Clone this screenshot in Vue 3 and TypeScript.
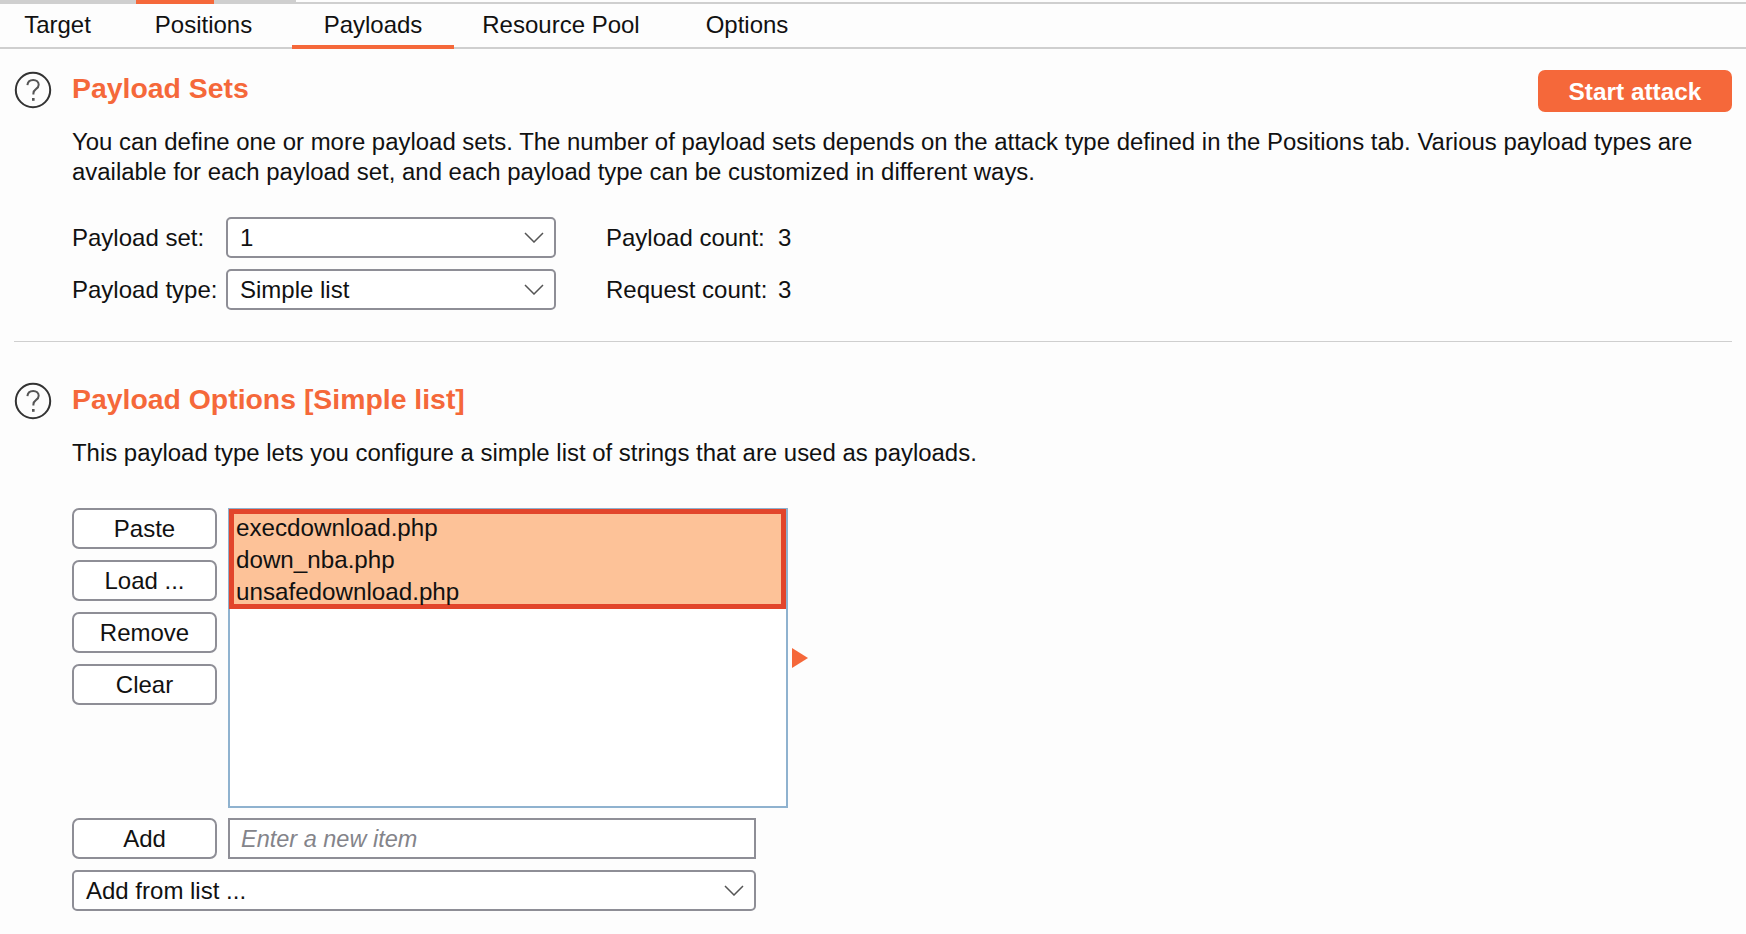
<template>
  <div class="page">
    <div class="top-strip"><span class="strip-active"></span></div>

    <nav class="tabs">
      <span v-for="tab in tabs" :key="tab.name" class="tab" :class="{ active: tab.name === 'Payloads' }" :style="{ width: tab.width + 'px' }">{{ tab.name }}</span>
    </nav>

    <section class="section first">
      <svg class="help" viewBox="0 0 38 38" width="38" height="38">
        <circle cx="19" cy="19" r="17.2" fill="none" stroke="#333" stroke-width="2" />
        <path d="M13.4 14.2c.3-3.400 2.700-5.300 5.800-5.300 3.200 0 5.500 1.900 5.500 4.800 0 2.200-1.200 3.300-2.800 4.400-1.700 1.200-2.500 2.100-2.500 4.400v1.100" fill="none" stroke="#555" stroke-width="2" />
        <rect x="18" y="27" width="2.600" height="2.800" fill="#555" />
      </svg>
      <div class="body">
        <div class="head">
          <h2>Payload Sets</h2>
          <button class="start">Start attack</button>
        </div>
        <p class="desc">You can define one or more payload sets. The number of payload sets depends on the attack type defined in the Positions tab. Various payload types are<br />available for each payload set, and each payload type can be customized in different ways.</p>
        <div class="form">
          <div v-for="row in setRows" :key="row.label" class="form-row">
            <span class="label">{{ row.label }}</span>
            <div class="select set-select">
              <span>{{ row.value }}</span>
              <svg class="chev" viewBox="0 0 20 11" width="20" height="11"><path d="M1 1l9 9 9-9" fill="none" stroke="#555" stroke-width="1.500" /></svg>
            </div>
            <span class="count-label">{{ row.countLabel }}</span>
            <span>3</span>
          </div>
        </div>
      </div>
    </section>

    <hr class="divider" />

    <section class="section second">
      <svg class="help" viewBox="0 0 38 38" width="38" height="38">
        <circle cx="19" cy="19" r="17.2" fill="none" stroke="#333" stroke-width="2" />
        <path d="M13.4 14.2c.3-3.400 2.700-5.300 5.800-5.300 3.200 0 5.500 1.900 5.500 4.800 0 2.200-1.200 3.300-2.800 4.400-1.700 1.200-2.500 2.100-2.500 4.400v1.100" fill="none" stroke="#555" stroke-width="2" />
        <rect x="18" y="27" width="2.600" height="2.800" fill="#555" />
      </svg>
      <div class="body">
        <h2>Payload Options [Simple list]</h2>
        <p class="desc single">This payload type lets you configure a simple list of strings that are used as payloads.</p>

        <div class="list-row">
          <div class="actions">
            <button v-for="action in actions" :key="action" class="btn">{{ action }}</button>
          </div>
          <div class="list">
            <div class="selection">
              <div v-for="item in items" :key="item" class="item">{{ item }}</div>
            </div>
          </div>
          <span class="arrow"></span>
        </div>

        <div class="add-row">
          <button class="btn">Add</button>
          <div class="input">Enter a new item</div>
        </div>
        <div class="select from-list">
          <span>Add from list ...</span>
          <svg class="chev" viewBox="0 0 20 11" width="20" height="11"><path d="M1 1l9 9 9-9" fill="none" stroke="#555" stroke-width="1.500" /></svg>
        </div>
      </div>
    </section>
  </div>
</template>

<script setup lang="ts">
const tabs = [
  { name: 'Target', width: 115 },
  { name: 'Positions', width: 177 },
  { name: 'Payloads', width: 162 },
  { name: 'Resource Pool', width: 214 },
  { name: 'Options', width: 158 }
]

const setRows = [
  { label: 'Payload set:', value: '1', countLabel: 'Payload count:' },
  { label: 'Payload type:', value: 'Simple list', countLabel: 'Request count:' }
]

const actions = ['Paste', 'Load ...', 'Remove', 'Clear']
const items = ['execdownload.php', 'down_nba.php', 'unsafedownload.php']
</script>

<style>
html,
body {
  margin: 0;
  background: #fdfdfd;
}
</style>

<style scoped>
.page {
  width: 1746px;
  height: 934px;
  overflow: hidden;
  background: #fdfdfd;
  color: #111;
  font-family: "Liberation Sans", Arial, sans-serif;
  font-size: 24px;
  line-height: 30px;
  box-sizing: border-box;
}

.top-strip {
  height: 2px;
  width: 296px;
  padding-left: 136px;
  background: #cfcfcf;
  box-sizing: border-box;
  margin-bottom: 1px;
}

.strip-active {
  display: block;
  position: relative;
  z-index: 1;
  width: 78px;
  height: 4px;
  background: #f5683a;
}

.tabs {
  display: flex;
  height: 47px;
  margin-top: -1px;
  border-top: 2px solid #cfcfcf;
  border-bottom: 2px solid #cfcfcf;
  box-sizing: border-box;
}

.tab {
  display: flex;
  flex: none;
  align-items: center;
  justify-content: center;
  height: 45px;
  padding-bottom: 4px;
  box-sizing: border-box;
}

.tab.active {
  height: 45px;
  padding-bottom: 0;
  border-bottom: 4px solid #f5683a;
}

.section {
  display: flex;
  padding: 0 14px;
  gap: 20px;
}

.first {
  padding-top: 21px;
}

.second {
  padding-top: 39px;
}

.help {
  flex: none;
  margin-top: 1px;
}

.body {
  flex: 1;
  min-width: 0;
}

.head {
  display: flex;
  justify-content: space-between;
  align-items: flex-start;
}

h2 {
  margin: 0;
  height: 38px;
  color: #f5683a;
  font-size: 28.4px;
  font-weight: 700;
  line-height: 36px;
}

.start {
  width: 194px;
  height: 42px;
  padding-top: 2px;
  border: none;
  border-radius: 7px;
  background: #f5683a;
  color: #fff;
  font: 700 24.4px "Liberation Sans", Arial, sans-serif;
}

.desc {
  margin: 15px 0 0;
  font-size: 23.95px;
  white-space: nowrap;
}

.single {
  margin-top: 19px;
}

.form {
  display: flex;
  flex-direction: column;
  gap: 11px;
  margin-top: 30px;
}

.form-row {
  display: flex;
  align-items: center;
}

.label {
  flex: none;
  width: 154px;
}

.select {
  display: flex;
  align-items: center;
  justify-content: space-between;
  height: 41px;
  padding: 0 10px 0 12px;
  border: 2px solid #8e8e96;
  border-radius: 5px;
  background: #fff;
  box-sizing: border-box;
}

.set-select {
  width: 330px;
}

.count-label {
  width: 172px;
  margin-left: 50px;
}

.chev {
  flex: none;
}

.divider {
  height: 1px;
  margin: 31px 14px 0;
  border: none;
  background: #cfcfcf;
}

.list-row {
  display: flex;
  align-items: flex-start;
  margin-top: 40px;
}

.actions {
  display: flex;
  flex-direction: column;
  gap: 11px;
  width: 145px;
  margin-right: 11px;
}

.btn {
  flex: none;
  width: 145px;
  height: 41px;
  border: 2px solid #8e8e96;
  border-radius: 7px;
  background: #fff;
  color: #111;
  font: 24px "Liberation Sans", Arial, sans-serif;
}

.list {
  width: 560px;
  height: 300px;
  border: 2px solid #8fb2cf;
  background: #fff;
  box-sizing: border-box;
}

.selection {
  height: 100px;
  margin: -1px 0 0 -1px;
  padding-left: 2px;
  border: 5px solid #e2452b;
  background: #fdc298;
  box-sizing: border-box;
}

.item {
  height: 32px;
  font-size: 24.2px;
  line-height: 28px;
}

.arrow {
  width: 0;
  height: 0;
  margin: 140px 0 0 4px;
  border-left: 16px solid #f5683a;
  border-top: 10px solid transparent;
  border-bottom: 10px solid transparent;
}

.add-row {
  display: flex;
  gap: 11px;
  margin-top: 10px;
}

.input {
  width: 528px;
  height: 41px;
  padding-left: 11px;
  border: 2px solid #8e8e96;
  background: #fff;
  color: #84848a;
  font-size: 23.5px;
  font-style: italic;
  line-height: 39px;
  box-sizing: border-box;
}

.from-list {
  width: 684px;
  height: 41px;
  margin-top: 11px;
}
</style>
